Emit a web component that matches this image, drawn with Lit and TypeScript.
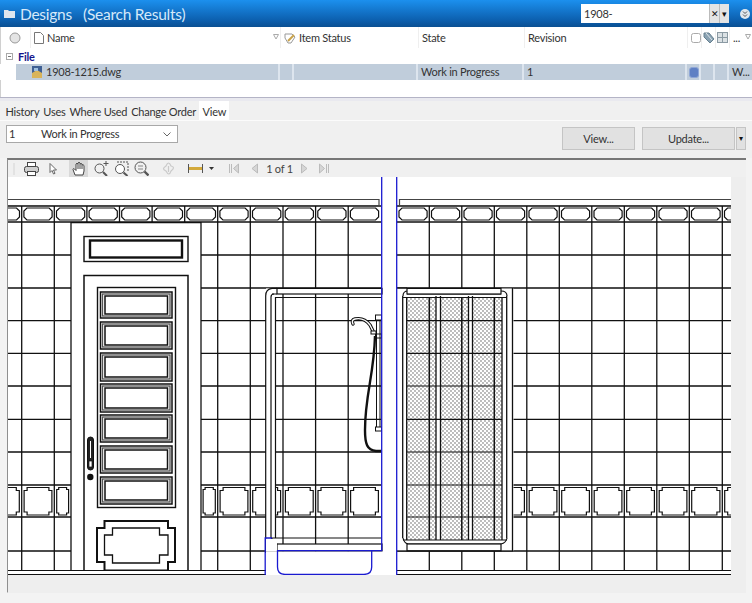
import { LitElement, css, html, svg } from "lit";
import { customElement } from "lit/decorators.js";

const LEFT_X = [21.7, 54.3, 86.9, 119.5, 152.1, 184.7, 217.7, 250.3, 283, 315.6, 348.2];
const RIGHT_X = [429.3, 461.8, 494.3, 526.8, 559.3, 591.8, 624.3, 656.8, 689.3, 722.3];
const ROWS = [222, 255, 288, 320.7, 353.3, 386, 419.3, 452, 485, 517, 551];
const DOOR_PANELS = [
  [292, 318], [322, 349], [353, 381], [384, 412], [415, 442], [446, 473], [477, 504],
];

// chamfered box used along the top frieze
const chamfer = (a: number, b: number, t: number, e: number, c = 3) =>
  `M${a + c} ${t}H${b - c}L${b} ${t + c}V${e - c}L${b - c} ${e}H${a + c}L${a} ${e - c}V${t + c}Z`;

// notched box used along the lower frieze
const notched = (a: number, b: number, t: number, e: number, c = 3) =>
  `M${a + c} ${t}H${b - c}V${t + c}H${b}V${e - c}H${b - c}V${e}H${a + c}V${e - c}H${a}V${t + c}H${a + c}Z`;

@customElement("app-root")
export class AppRoot extends LitElement {
  static styles = css`
    :host {
      display: block;
      width: 752px;
      height: 603px;
      background: #f3f3f3;
      font-family: Lato, "Open Sans", sans-serif;
      font-size: 11px;
      letter-spacing: -0.25px;
      color: #333;
      overflow: hidden;
    }
    .title {
      height: 27px;
      display: flex;
      align-items: center;
      background: linear-gradient(#1c90ee, #0c5fae 75%, #0a4f92);
      color: #d5e9fa;
    }
    .folder { margin: 0 5px 0 4px; }
    .title h1 {
      margin: 0;
      font-size: 15.5px;
      font-weight: 400;
      white-space: pre;
      flex: 1;
    }
    .search {
      width: 128px;
      height: 19px;
      background: #fff;
      color: #333;
      padding-left: 3px;
      box-sizing: border-box;
      line-height: 19px;
    }
    .sbtn {
      width: 10px;
      height: 19px;
      background: #e4e4e4;
      color: #111;
      font-size: 9px;
      line-height: 19px;
      text-align: center;
      border-left: 1px solid #bbb;
      box-sizing: border-box;
    }
    .more { margin: 0 2px 0 11px; }
    .results {
      height: 70px;
      background: #fff;
      border-left: 1px solid #d0d0d0;
      box-sizing: border-box;
    }
    .head, .row {
      display: grid;
      align-items: center;
      margin-left: -1px;
    }
    .head {
      height: 21px;
      grid-template-columns: 30px 250px 138px 106px 163px 14px 14px 14px 23px;
    }
    .head > div {
      height: 21px;
      display: flex;
      align-items: center;
      border-left: 1px solid #efefef;
      box-sizing: border-box;
      padding-left: 3px;
      gap: 3px;
      position: relative;
    }
    .head > div:first-child { border: 0; justify-content: center; padding: 0; }
    .head > .glyph { padding-left: 1px; }
    .sort { position: absolute; right: 1px; top: 7px; }
    .group {
      height: 16px;
      display: flex;
      align-items: center;
      gap: 5px;
      padding-left: 6px;
      margin-left: -1px;
      font-weight: 700;
      color: #14148c;
    }
    .expander {
      width: 7px;
      height: 7px;
      border: 1px solid #a9a9a9;
      position: relative;
      box-sizing: border-box;
    }
    .expander::after {
      content: "";
      position: absolute;
      left: 1px;
      right: 1px;
      top: 2px;
      height: 1px;
      background: #777;
    }
    .row {
      height: 16px;
      grid-template-columns: 16px 264px 14px 124px 106px 163px 14px 14px 14px 23px;
    }
    .row > div {
      height: 16px;
      line-height: 16px;
      background: #c0cddb;
      border-right: 2px solid #dde5ee;
      box-sizing: border-box;
      padding-left: 3px;
      display: flex;
      align-items: center;
      white-space: nowrap;
    }
    .row > div:first-child { background: #fff; border: 0; }
    .row > .name { padding-left: 16px; gap: 4px; }
    .row > .mark { padding-left: 2px; }
    .row > div:last-child { border: 0; }
    .flag {
      width: 10px;
      height: 11px;
      border-radius: 3px;
      background: #5f80c4;
      border: 1px solid #8ea6d6;
      box-sizing: border-box;
      flex: none;
    }
    .split {
      height: 4px;
      box-sizing: border-box;
      border-top: 1px solid #b4b4c6;
      background: #e9e9ef;
    }
    .tabs {
      height: 19px;
      display: flex;
      padding-left: 4px;
      gap: 1px;
      background: #f0f0f0;
      border-bottom: 1px solid #fbfbfb;
    }
    .tab {
      line-height: 22px;
      padding: 0 1.5px;
      background: #f0f0f0;
      white-space: nowrap;
    }
    .tab.on { background: #fff; padding: 0 3px 0 4px; }
    .controls {
      height: 37px;
      padding-left: 6px;
      padding-right: 6px;
      display: flex;
      align-items: flex-start;
      background: #f0f0f0;
    }
    .select {
      width: 172px;
      height: 18px;
      margin-top: 4px;
      background: #fff;
      border: 1px solid #a8a8a8;
      box-sizing: border-box;
      display: grid;
      grid-template-columns: 32px 1fr 14px;
      align-items: center;
      padding-left: 2px;
      line-height: 16px;
    }
    .btn {
      height: 23px;
      margin-top: 6px;
      background: #e1e1e1;
      border: 1px solid #c4c4c4;
      box-sizing: border-box;
      line-height: 21px;
      text-align: center;
    }
    .view { width: 73px; margin-left: 384px; }
    .update { width: 93px; margin-left: 7px; }
    .drop {
      width: 10px;
      margin-left: 1px;
      font-size: 8px;
      color: #111;
    }
    .viewer {
      margin-left: 7px;
      margin-right: 6px;
      height: 435px;
      border-left: 1px solid #8f8f8f;
      border-top: 2px solid #777;
      border-bottom: 1px solid #fafafa;
      background: #eeeeee;
      box-sizing: border-box;
    }
    .tools {
      height: 17px;
      display: grid;
      grid-template-columns: 12px 22px 21px 3px 25px 20px 20px 21px 32px 23px 9px 5px 27px 13px 37px 12px 27px;
      align-items: center;
      justify-items: center;
      background: #f0f0f0;
      color: #444;
    }
    .tools svg { display: block; }
    .hand {
      width: 19px;
      height: 17px;
      background: #d9d9d9;
      display: flex;
      align-items: center;
      justify-content: center;
    }
    .grip { width: 2px; height: 12px; background: #e2e2e2; }
    .count { white-space: nowrap; }
    .drawing { display: block; }
    .tail {
      height: 18px;
      background: #eeeeee;
    }
  `;

  private drawing() {
    const ink = "#111";
    return html`<svg class="drawing" width="723" height="398" viewBox="8 177 723 398">
      <defs>
        <pattern id="dots" width="4" height="4" patternUnits="userSpaceOnUse">
          <rect width="4" height="4" fill="#fff"></rect>
          <circle cx="1" cy="1" r=".65" fill="#444"></circle>
          <circle cx="3" cy="3" r=".65" fill="#444"></circle>
        </pattern>
      </defs>
      <rect x="8" y="177" width="723" height="398" fill="#fff"></rect>
      <g stroke=${ink} stroke-width="1.3" fill="none">
        ${[...LEFT_X, ...RIGHT_X].map((x) => svg`<path d="M${x} 206V575"></path>`)}
        ${ROWS.map((y) => svg`<path d="M8 ${y}H381M397 ${y}H731"></path>`)}
        <path d="M8 206H381M397 206H731" stroke-width="1.4"></path>
      </g>
      <path d="M8 199.5H379V205.5H8M731 199.5H399.5V205.5H731" fill="#fff" stroke="#444" stroke-width="1.2"></path>
      ${this.friezes(ink)} ${this.door(ink)} ${this.leftWindow(ink)} ${this.rightWindow(ink)} ${this.footer(ink)}
      ${this.shower()} ${this.blueLines()}
    </svg>`;
  }

  private friezes(ink: string) {
    const cells = [
      [-10.9, 21.7], ...LEFT_X.slice(0, -1).map((x, i) => [x, LEFT_X[i + 1]]), [348.2, 380.8],
      [396.8, 429.3], ...RIGHT_X.slice(0, -1).map((x, i) => [x, RIGHT_X[i + 1]]), [722.3, 755],
    ];
    const low = cells
      .filter(([a, b]) => b <= 71 || a >= 200)
      .concat([[54.3, 71], [200.7, 217.7]])
      .filter(([a, b]) => !(a === 54.3 && b === 86.9) && !(a === 184.7 && b === 217.7));
    return svg`<g fill="#fff" stroke=${ink} stroke-width="1.2">
      ${cells.map(([a, b]) => svg`<path d=${chamfer(a + 2.2, b - 2.2, 208, 220)}></path>`)}
      ${low.map(([a, b]) => svg`<path d=${notched(a + 2.4, b - 2.4, 487.5, 515, b - a < 20 ? 2 : 3)}></path>`)}
    </g>`;
  }

  private door(ink: string) {
    return svg`<g stroke=${ink} fill="#fff">
      <rect x="71" y="222.6" width="130" height="353" stroke-width="1.3"></rect>
      <rect x="84" y="236.5" width="104" height="25" stroke-width="1.4"></rect>
      <rect x="90" y="240.5" width="92" height="17" stroke-width="2.4"></rect>
      <path d="M84 577V275.5H188V577" stroke-width="1.5"></path>
      <rect x="97.5" y="287.5" width="78" height="220" stroke-width="1.4"></rect>
      ${DOOR_PANELS.map(
        ([t, e]) => svg`
          <rect x="100.5" y=${t} width="71.5" height=${e - t} stroke-width="1.5"></rect>
          <rect x="102.5" y=${t + 2} width="67.5" height=${e - t - 4} stroke="#555" stroke-width="1.3"></rect>
          <rect x="105" y=${t + 4} width="62.5" height=${e - t - 8} stroke-width="1.5"></rect>`
      )}
      <path d="M104.5 521H168V528H175V562H168V570.5H104.5V562H97V528H104.5Z" stroke-width="2"></path>
      <path d="M112.5 528H159.5V535H168V555H159.5V563H112.5V555H104.5V535H112.5Z" stroke-width="1.3"></path>
      <rect x="87.5" y="437" width="6" height="33" rx="3" fill="#222" stroke-width="1"></rect>
      <path d="M90.5 441V458" stroke="#fff" stroke-width="1"></path>
      <rect x="89" y="461" width="3" height="6" fill="#fff" stroke-width=".7"></rect>
      <circle cx="90.3" cy="477" r="3.2" fill="#111" stroke="none"></circle>
    </g>`;
  }

  private leftWindow(ink: string) {
    return svg`<g stroke=${ink} stroke-width="1.2" fill="#fff">
      <rect x="266" y="288.4" width="9.5" height="250" stroke="none"></rect>
      <rect x="277" y="288.4" width="105" height="5.6"></rect>
      <path d="M382 297.5H277M277 294H272" fill="none"></path>
      <path d="M265.7 553V296Q265.7 289 272 288.4H277" fill="none"></path>
      <path d="M271 538V297Q271 294 274 294M275.5 538V297.5H277" fill="none"></path>
      <rect x="277" y="544" width="105" height="6.8"></rect>
      <path d="M271 538H382" fill="none"></path>
      <path d="M271 538L277 544" fill="none"></path>
    </g>`;
  }

  private rightWindow(ink: string) {
    const panels = [[407.3, 436], [440.7, 468.3], [472.7, 501.7]];
    return svg`<g stroke=${ink} stroke-width="1.2">
      <rect x="397" y="288.6" width="116.5" height="262" fill="#fff" stroke="none"></rect>
      <path d="M397 288H407" fill="none"></path>
      ${panels.map(([a, b]) => svg`<rect x=${a} y="298" width=${b - a} height="242" fill="url(#dots)" stroke="none"></rect>`)}
      <g fill="none">
        ${[320.7, 353.3, 386, 419.3, 452, 485, 517].map((y) => svg`<path d="M407 ${y}H502"></path>`)}
        <path d="M429.3 298V540M461.8 298V540M494.3 298V540" stroke-width="1.5"></path>
        <path d="M402.7 296V538M406.7 298V540M502 298V540M506.7 296V538M512.5 288V551" stroke-width="1.3"></path>
        <path d="M436 296V540M440.5 296V540M468.5 296V540M472.5 296V540" stroke-width="1.3"></path>
        <path d="M403 296Q403 291 408 291M507 296Q507 291 501 291M403 538Q404 543 408 544M507 538Q506 543 501 544"></path>
        <path d="M403 297.5H507M407 294H501M403 540H507M407 544H501"></path>
      </g>
      <rect x="407" y="288.4" width="94" height="5.6" fill="#fff"></rect>
      <rect x="407" y="544" width="94" height="6.8" fill="#fff"></rect>
      <path d="M397 551H513" fill="none"></path>
    </g>`;
  }

  private footer(ink: string) {
    return svg`<g>
      <rect x="8" y="570.5" width="723" height="4" fill="#fff"></rect>
      <rect x="266" y="551.5" width="115" height="24" fill="#fff"></rect>
      <rect x="266" y="539" width="11" height="12.5" fill="#fff"></rect>
      <path d="M8 570.5H266M8 574.6H266M397 570.5H731M397 574.6H731" stroke=${ink} stroke-width="1.2" fill="none"></path>
    </g>`;
  }

  private shower() {
    return svg`<g fill="none" stroke="#111">
      <rect x="375.5" y="315" width="6" height="5" fill="#fff" stroke-width="1"></rect>
      <rect x="375.5" y="334" width="6" height="4" fill="#fff" stroke-width="1"></rect>
      <rect x="375.5" y="427" width="6" height="4" fill="#fff" stroke-width="1"></rect>
      <path d="M376.5 320V427M380 320V427" stroke-width="1"></path>
      <path d="M353 324Q351 320 355 319Q364 317 370 325L373 331" stroke-width="3.4" stroke-linecap="round"></path>
      <path d="M353 324Q351 320 355 319Q364 317 370 325L373 331" stroke="#fff" stroke-width="1.4" stroke-linecap="round"></path>
      <rect x="371" y="331" width="5" height="3" fill="#fff" stroke-width="1"></rect>
      <path d="M375 336C374 375 365 395 365 430C365 444 367 450 376 451H381" stroke-width="2.4"></path>
    </g>`;
  }

  private blueLines() {
    return svg`<g fill="none" stroke="#1a1ad0" stroke-width="1.3">
      <path d="M381.7 177V550.7H277.5V567Q277.5 574.4 285 574.4H364Q371.7 574.4 371.7 567V551"></path>
      <path d="M396.7 177V575"></path>
      <path d="M265.2 575V538H272"></path>
    </g>`;
  }

  render() {
    return html`
      <div class="title">
        <svg class="folder" width="11" height="9" viewBox="0 0 11 9"><path d="M0 1h4l1 1h6v7H0z" fill="#dfe6ee"></path></svg>
        <h1>Designs   (Search Results)</h1>
        <div class="search">1908-</div>
        <div class="sbtn">✕</div>
        <div class="sbtn">▾</div>
        <svg class="more" width="10" height="10" viewBox="0 0 10 10">
          <circle cx="5" cy="5" r="5" fill="#dfe7ee"></circle>
          <path d="M3 2.5l2 2 2-2M3 5.5l2 2 2-2" stroke="#555" fill="none"></path>
        </svg>
      </div>

      <div class="results">
        <div class="head">
          <div><svg width="12" height="12" viewBox="0 0 12 12"><circle cx="6" cy="6" r="5" fill="#e4e4e4" stroke="#999"></circle></svg></div>
          <div>
            <svg width="10" height="12" viewBox="0 0 10 12"><path d="M.5.5h6l3 3v8h-9z" fill="#fff" stroke="#777"></path></svg>
            <span>Name</span>
            <svg class="sort" width="6" height="6" viewBox="0 0 6 6"><path d="M.5.5h5L3 5z" fill="none" stroke="#aaa"></path></svg>
          </div>
          <div>
            <svg width="12" height="12" viewBox="0 0 12 12"><path d="M1 2h7l3 3-4 6H4L1 6z" fill="#fff" stroke="#999"></path><path d="M4 9l6-6" stroke="#c9a24a" stroke-width="2"></path></svg>
            <span>Item Status</span>
          </div>
          <div>State</div>
          <div>Revision</div>
          <div><svg width="10" height="10" viewBox="0 0 10 10"><rect x=".5" y=".5" width="9" height="9" rx="2" fill="#fff" stroke="#aaa"></rect></svg></div>
          <div class="glyph"><svg width="12" height="12" viewBox="0 0 12 12"><path d="M1 1h5l5 6-4 4-6-6z" fill="#8aa2b2" stroke="#66808f"></path><path d="M3 1l6 7" stroke="#dfe6ea"></path></svg></div>
          <div class="glyph"><svg width="11" height="11" viewBox="0 0 11 11"><rect width="11" height="11" fill="#8b9aa3"></rect><path d="M1 1h4v4H1zM6 1h4v4H6zM1 6h4v4H1zM6 6h4v4H6z" fill="#dbe1e4"></path></svg></div>
          <div>...<svg class="sort" width="6" height="6" viewBox="0 0 6 6"><path d="M.5.5h5L3 5z" fill="none" stroke="#aaa"></path></svg></div>
        </div>
        <div class="group"><span class="expander"></span>File</div>
        <div class="row">
          <div></div>
          <div class="name">
            <svg width="10" height="12" viewBox="0 0 10 12">
              <rect width="10" height="12" fill="#3f5f93"></rect>
              <path d="M0 7l5-3 5 3v5H0z" fill="#d9b45a"></path>
              <path d="M2 2h4v3H2z" fill="#9fc0e0"></path>
            </svg>
            <span>1908-1215.dwg</span>
          </div>
          <div></div>
          <div></div>
          <div>Work in Progress</div>
          <div>1</div>
          <div class="mark"><span class="flag"></span></div>
          <div></div>
          <div></div>
          <div>W...</div>
        </div>
      </div>
      <div class="split"></div>

      <div class="tabs">
        <div class="tab">History</div>
        <div class="tab">Uses</div>
        <div class="tab">Where Used</div>
        <div class="tab">Change Order</div>
        <div class="tab on">View</div>
      </div>

      <div class="controls">
        <div class="select">
          <span>1</span>
          <span>Work in Progress</span>
          <svg width="8" height="5" viewBox="0 0 8 5"><path d="M.5.5L4 4 7.5.5" fill="none" stroke="#666"></path></svg>
        </div>
        <div class="btn view">View...</div>
        <div class="btn update">Update...</div>
        <div class="btn drop">▾</div>
      </div>

      <div class="viewer">
        <div class="tools">
          <span class="grip"></span>
          <svg width="15" height="14" viewBox="0 0 15 14" fill="none" stroke="#444">
            <rect x="3.5" y=".5" width="8" height="4" fill="#fff"></rect>
            <rect x=".5" y="4.5" width="14" height="6" rx="2" fill="#cfcfcf"></rect>
            <rect x="3.5" y="9.5" width="8" height="4" fill="#fff"></rect>
          </svg>
          <svg width="8" height="12" viewBox="0 0 8 12"><path d="M1 .5v9l2-2 1.5 3.5 1.5-.6L4.5 7H7.5z" fill="#fff" stroke="#666"></path></svg>
          <span></span>
          <span class="hand">
            <svg width="14" height="15" viewBox="0 0 14 15" fill="#fff" stroke="#444">
              <path d="M3 14L1 8.5Q1 7 2.5 8L4 9.5V3Q5 1.5 6 3V2Q7 .5 8 2V3Q9 2 10 3V4Q11 3 12 4.5V10L11 14Z"></path>
              <path d="M6 3v5M8 3v5M10 4v4" fill="none"></path>
            </svg>
          </span>
          <svg width="15" height="15" viewBox="0 0 15 15" fill="none" stroke="#555">
            <circle cx="5.5" cy="7.5" r="4.5"></circle>
            <path d="M9 11l4 4" stroke-width="2"></path>
            <path d="M12 0v5M9.5 2.5h5"></path>
          </svg>
          <svg width="15" height="15" viewBox="0 0 15 15" fill="none" stroke="#555">
            <path d="M3 1h11v10" stroke-dasharray="2 1"></path>
            <circle cx="6" cy="8" r="4.5" fill="#fff"></circle>
            <path d="M9.5 11.5l4 3.5" stroke-width="2"></path>
          </svg>
          <svg width="15" height="15" viewBox="0 0 15 15" fill="none" stroke="#555">
            <circle cx="6.5" cy="6.5" r="5.5"></circle>
            <path d="M10.5 10.5l4 4" stroke-width="2.4"></path>
            <path d="M4 5h5M4 8h5" stroke="#888"></path>
          </svg>
          <svg width="15" height="16" viewBox="0 0 15 16" fill="none" stroke="#c9c9c9" stroke-width="1.2">
            <path d="M5 5Q7.5-1 10 5Q15 6 10 10Q8 16 5 10Q0 8 5 5Z"></path>
            <path d="M7.5 5v6"></path>
          </svg>
          <svg width="15" height="9" viewBox="0 0 15 9">
            <rect y="3" width="15" height="3" fill="#d3a93b"></rect>
            <path d="M.5 0v9M14.5 0v9" stroke="#555"></path>
          </svg>
          <svg width="5" height="3" viewBox="0 0 5 3"><path d="M0 0h5L2.5 3z" fill="#333"></path></svg>
          <span></span>
          <svg width="11" height="11" viewBox="0 0 11 11" fill="#d6d6d6" stroke="#bbb"><path d="M.5 1v9M2.5 1v9M9.5 1v9L4.5 5.5z"></path></svg>
          <svg width="7" height="11" viewBox="0 0 7 11" fill="#d6d6d6" stroke="#bbb"><path d="M6.5 1v9L1 5.5z"></path></svg>
          <span class="count">1 of 1</span>
          <svg width="7" height="11" viewBox="0 0 7 11" fill="#d6d6d6" stroke="#bbb"><path d="M.5 1v9L6 5.5z"></path></svg>
          <svg width="11" height="11" viewBox="0 0 11 11" fill="#d6d6d6" stroke="#bbb"><path d="M10.5 1v9M8.5 1v9M1.5 1v9l5-4.5z"></path></svg>
        </div>
        ${this.drawing()}
        <div class="tail"></div>
      </div>
    `;
  }
}
